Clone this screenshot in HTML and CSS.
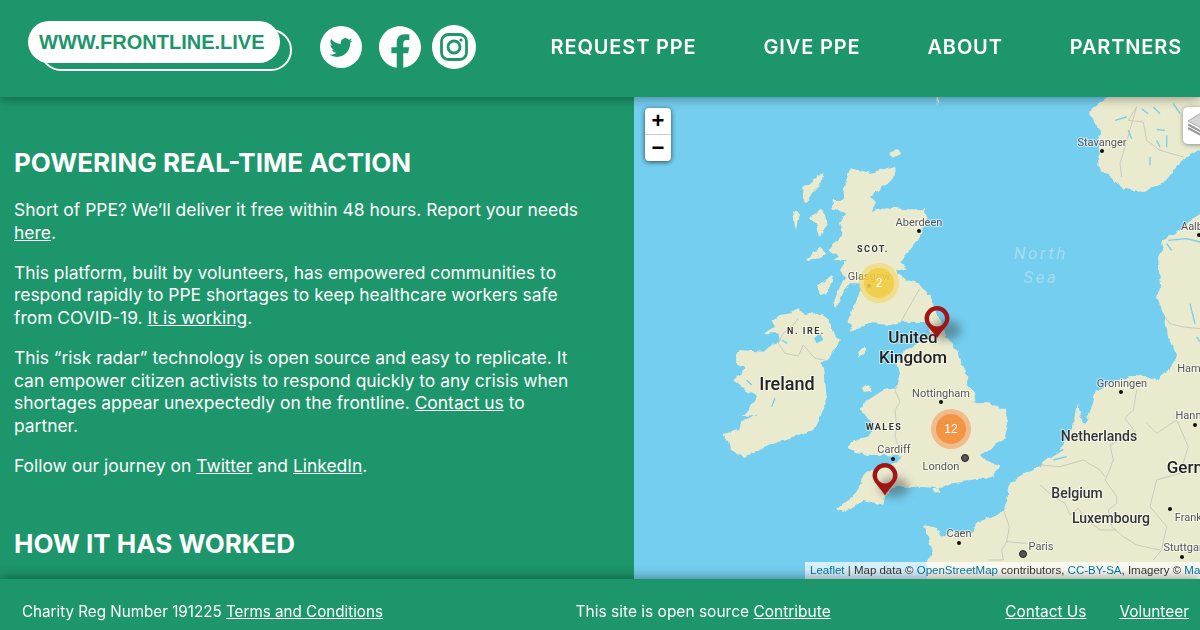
FILE: index.html
```html
<!DOCTYPE html>
<html lang="en">
  <head>
    <meta charset="UTF-8" />
    <meta name="viewport" content="width=device-width, initial-scale=1.0" />
    <title>Frontline Live</title>
    <link rel="stylesheet" href="styles.css">
  </head>
  <body>
    <div class="header">
      <div class="brand">
        <a class="logo">WWW.FRONTLINE.LIVE</a>
        <div class="social">
          <svg class="social-icon twitter" viewBox="0 0 42 42">
            <circle cx="21" cy="21" r="21" fill="#fff" />
            <path transform="translate(9.5 10) scale(.96)" fill="#1c966a" d="M23.953 4.57a10 10 0 01-2.825.775 4.958 4.958 0 002.163-2.723c-.951.555-2.005.959-3.127 1.184a4.92 4.92 0 00-8.384 4.482C7.69 8.095 4.067 6.13 1.64 3.162a4.822 4.822 0 00-.666 2.475c0 1.71.87 3.213 2.188 4.096a4.904 4.904 0 01-2.228-.616v.06a4.923 4.923 0 003.946 4.827 4.996 4.996 0 01-2.212.085 4.936 4.936 0 004.604 3.417 9.867 9.867 0 01-6.102 2.105c-.39 0-.779-.023-1.17-.067a13.995 13.995 0 007.557 2.209c9.053 0 13.998-7.496 13.998-13.985 0-.21 0-.42-.015-.63A9.935 9.935 0 0024 4.59z" />
          </svg>
          <svg class="social-icon facebook" viewBox="0 0 24 24">
            <path fill="#fff" d="M24 12.073c0-6.627-5.373-12-12-12s-12 5.373-12 12c0 5.99 4.388 10.954 10.125 11.854v-8.385H7.078v-3.47h3.047V9.43c0-3.007 1.792-4.669 4.533-4.669 1.312 0 2.686.235 2.686.235v2.953H15.83c-1.491 0-1.956.925-1.956 1.874v2.25h3.328l-.532 3.47h-2.796v8.385C19.612 23.027 24 18.062 24 12.073z" />
          </svg>
          <svg class="social-icon instagram" viewBox="0 0 44 44">
            <circle cx="22" cy="22" r="22" fill="#fff" />
            <rect x="9.500" y="9.500" width="25" height="25" rx="7" fill="none" stroke="#1c966a" stroke-width="2.800" />
            <circle cx="22" cy="22" r="6" fill="none" stroke="#1c966a" stroke-width="2.800" />
            <circle cx="29" cy="15" r="1.600" fill="#1c966a" />
          </svg>
        </div>
      </div>
      <nav class="nav">
        <a>REQUEST PPE</a>
        <a>GIVE PPE</a>
        <a>ABOUT</a>
        <a>PARTNERS</a>
      </nav>
    </div>

    <div class="main">
      <div class="content">
        <h2>POWERING REAL-TIME ACTION</h2>
        <p>Short of PPE? We’ll deliver it free within 48 hours. Report your needs <a>here</a>.</p>
        <p>This platform, built by volunteers, has empowered communities to respond rapidly to PPE shortages to keep healthcare workers safe from COVID-19. <a>It is working</a>.</p>
        <p>This “risk radar” technology is open source and easy to replicate. It can empower citizen activists to respond quickly to any crisis when shortages appear unexpectedly on the frontline. <a>Contact us</a> to partner.</p>
        <p>Follow our journey on <a>Twitter</a> and <a>LinkedIn</a>.</p>
        <h2 class="second">HOW IT HAS WORKED</h2>
      </div>

      <div class="map">
        <svg class="map-canvas" viewBox="634 97 566 482">
          <defs>
            <filter id="rough" filterUnits="userSpaceOnUse" x="624" y="87" width="590" height="510">
              <feTurbulence type="fractalNoise" baseFrequency="0.14" numOctaves="2" seed="4" />
              <feDisplacementMap in="SourceGraphic" scale="5" xChannelSelector="R" yChannelSelector="G" />
            </filter>
          </defs>
          <rect x="634" y="97" width="566" height="482" fill="#74ceef" />

          <!-- land, traced in 3x crop coordinates -->
          <g class="land" filter="url(#rough)">
            <g transform="translate(790 150) scale(.3333)">
              <path d="M180 55 L240 68 L315 48 L318 75 L295 100 L265 120 L240 140 L258 160 L245 185 L290 172 L350 178 L405 178 L412 205 L395 245 L385 270 L360 300 L330 335 L352 355 L320 362 L335 385 L385 400 L420 440 L440 490 L470 560 L500 600 L520 650 L535 680 L530 705 L555 725 L560 760 L600 760 L645 780 L655 820 L645 860 L610 890 L570 915 L590 935 L630 945 L610 980 L560 990 L490 1000 L450 1015 L390 1010 L330 1010 L305 1015 L285 1040 L280 1065 L260 1060 L220 1050 L165 1085 L140 1075 L190 1040 L215 1000 L220 975 L255 955 L310 940 L335 920 L290 915 L240 915 L200 910 L170 890 L195 870 L230 860 L255 840 L240 810 L215 785 L220 760 L280 720 L315 715 L322 700 L330 670 L322 640 L345 600 L390 579 L420 555 L414 516 L340 515 L300 525 L250 520 L230 525 L180 545 L185 520 L172 515 L190 470 L215 420 L205 400 L180 400 L165 420 L150 445 L135 475 L130 460 L150 410 L165 380 L150 360 L170 330 L130 330 L150 320 L115 300 L140 270 L160 250 L150 220 L165 190 L130 175 L128 150 L165 150 L160 120 Z" />
              <path d="M40 115 L85 75 L100 70 L95 100 L70 125 L50 160 L40 140 Z" />
              <path d="M60 205 L90 175 L105 195 L110 225 L90 260 L80 225 Z" />
              <path d="M10 180 L28 185 L18 240 L12 210 Z" />
              <path d="M50 325 L90 290 L110 310 L90 325 L50 330 Z" />
              <path d="M82 410 L125 375 L130 395 L110 430 L90 435 Z" />
              <path d="M295 10 L320 0 L335 10 L310 25 Z" />
              <path d="M215 710 L240 705 L245 725 L225 728 Z" />
              <path d="M205 605 L225 590 L225 610 L208 625 Z" />
              <path d="M430 1018 L450 1015 L452 1025 L435 1028 Z" />
            </g>
            <g transform="translate(700 290) scale(.3333)">
              <path d="M190 130 L225 110 L215 90 L240 75 L275 70 L295 55 L315 75 L350 68 L385 85 L400 130 L420 150 L405 175 L385 210 L360 215 L370 240 L375 300 L380 340 L350 400 L340 420 L310 430 L250 450 L200 470 L160 490 L130 500 L90 480 L85 455 L70 432 L115 420 L120 395 L170 375 L125 378 L160 340 L170 320 L135 300 L100 270 L125 250 L130 235 L105 215 L115 180 L195 185 L215 165 L240 155 L235 130 Z" />
            </g>
            <g transform="translate(1040 97) scale(.3333)">
              <path d="M245 -30 L160 30 L150 50 L180 100 L175 180 L175 210 L210 240 L250 275 L310 285 L370 260 L410 210 L440 180 L510 140 L510 -30 Z" />
            </g>
            <path d="M1215 205 L1200 214 L1180 230 L1162 240 L1163 250 L1158 257 L1160 287 L1157 297 L1165 317 L1168 337 L1177 357 L1168 370 L1157 380 L1137 375 L1110 383 L1095 393 L1093 403 L1085 425 L1077 403 L1073 427 L1060 450 L1050 457 L1040 465 L1010 483 L1007 500 L1003 512 L975 523 L972 533 L953 532 L940 537 L938 528 L923 525 L928 537 L932 553 L927 563 L925 595 L1215 595 Z" />
            <path d="M937 90 L941 90 L938 107 Z" />
          </g>

          <g class="water">
            <g transform="translate(1040 97) scale(.3333)">
              <path d="M305 35 L325 50 M340 30 L360 50 M400 20 L420 50 M265 100 L275 125 M350 130 L360 150 M380 115 L380 150 M330 180 L330 205 M350 98 L375 100 M225 70 L260 60" />
              <path d="M385 430 L440 425 L480 435 M450 620 L465 680 M470 720 L480 735 M380 440 L395 460" />
            </g>
            <g transform="translate(700 290) scale(.3333)">
              <path class="lake" d="M342 145 L360 130 L370 150 L350 160 Z" />
              <path d="M245 150 L262 160 M215 350 L225 325 M140 270 L155 285" />
            </g>
            <g transform="translate(1040 360) scale(.3333)">
              <path d="M30 293 L70 268 M40 300 L80 290" />
            </g>
          </g>

          <g class="border">
            <g transform="translate(1040 360) scale(.3333)">
              <path d="M290 90 L280 150 L255 175 L285 215 L210 255 L220 300 L205 340 L195 360 L230 410 L230 430 L205 450 L215 500 L250 530 L290 555 L360 570" />
              <path d="M0 315 L60 320 L130 300 L180 330 L195 350" />
              <path d="M0 375 L40 410 L75 430 L90 465 L115 445 L130 470 L180 510 L230 510" />
              <path d="M320 190 L350 220 L410 180 L445 260 L420 340 L350 360 L340 400 L330 440 L380 500 L365 570 L340 600" />
            </g>
            <g transform="translate(1040 97) scale(.3333)">
              <path d="M375 660 L390 680 L430 690 L480 695" />
              <path d="M290 30 L265 70 L310 75 L320 130 L360 160 L430 180 M290 30 L240 200 L245 240" />
            </g>
            <g transform="translate(790 150) scale(.3333)">
              <path d="M330 520 L375 440 L390 415" />
            </g>
            <g transform="translate(820 340) scale(.3333)">
              <path d="M225 150 L240 185 L225 210 L230 260 L225 290 L235 320" />
            </g>
            <g transform="translate(700 290) scale(.3333)">
              <path d="M295 85 L280 105 L250 130 L235 160 L255 190 L295 198 L310 165 L345 205 L375 210" />
            </g>
            <g transform="translate(900 500) scale(.3333)">
              <path d="M310 30 L328 80 L320 125 L380 130 M320 125 L305 150 L310 180 L265 180" />
            </g>
          </g>

          <g class="label">
            <text x="1102" y="146" class="city">Stavanger</text>
            <text x="919" y="226" class="city">Aberdeen</text>
            <text x="873" y="252" class="region">SCOT.</text>
            <text x="806" y="334" class="region">N. IRE.</text>
            <text x="884" y="430" class="region">WALES</text>
            <text x="951" y="427" class="region">ENG.</text>
            <text x="1041" y="259" class="sea">North</text>
            <text x="1041" y="283" class="sea">Sea</text>
            <text x="869" y="280" class="city">Glasgow</text>
            <text x="913" y="343" class="big">United</text>
            <text x="913" y="363" class="big">Kingdom</text>
            <text x="787" y="390" class="big ireland">Ireland</text>
            <text x="941" y="397" class="city">Nottingham</text>
            <text x="894" y="453" class="city">Cardiff</text>
            <text x="941" y="470" class="city">London</text>
            <text x="1122" y="387" class="city">Groningen</text>
            <text x="1099" y="441" class="country">Netherlands</text>
            <text x="1077" y="498" class="country">Belgium</text>
            <text x="1111" y="523" class="country">Luxembourg</text>
            <text x="959" y="537" class="city">Caen</text>
            <text x="1041" y="550" class="city">Paris</text>
            <text x="1201" y="473" class="big">Germany</text>
            <text x="1197" y="521" class="city">Frankfurt</text>
            <text x="1185" y="551" class="city">Stuttgart</text>
            <text x="1200" y="230" class="city">Aalborg</text>
            <text x="1200" y="372" class="city">Hamburg</text>
            <text x="1199" y="419" class="city">Hannover</text>
          </g>
          <g fill="#111">
            <circle cx="1102" cy="151" r="2" />
            <circle cx="919" cy="231" r="2" />
            <circle cx="869" cy="286" r="2" />
            <circle cx="941" cy="402" r="2" />
            <circle cx="893" cy="459" r="2" />
            <circle cx="1121" cy="392" r="2" />
            <circle cx="959" cy="543" r="2" />
            <circle cx="1170" cy="509" r="2" />
            <circle cx="1182" cy="557" r="2" />
            <circle cx="1195" cy="425" r="2" />
            <circle cx="1199" cy="235" r="2" />
            <circle cx="965" cy="458" r="3.500" fill="#555" stroke="#222" />
            <circle cx="1023" cy="554" r="3.500" fill="#555" stroke="#222" />
          </g>

          <circle cx="879" cy="283" r="20" fill="#f1d357" fill-opacity="0.55" />
          <circle cx="879" cy="283" r="15" fill="#f0c93a" fill-opacity="0.75" />
          <text x="879" y="287" class="count">2</text>
          <circle cx="951" cy="429" r="20" fill="#f5a268" fill-opacity="0.65" />
          <circle cx="951" cy="429" r="15" fill="#f39140" fill-opacity="0.92" />
          <text x="951" y="433" class="count">12</text>

          <g class="pin-shadow" fill="#333" fill-opacity="0.4">
            <ellipse cx="946" cy="330" rx="15" ry="10" />
            <ellipse cx="894" cy="487" rx="15" ry="10" />
          </g>
          <path class="pin" d="M937 338 C932 330 924.500 325 924.500 318.500 A12.500 12.500 0 0 1 949.500 318.500 C949.500 325 942 330 937 338 Z M937 310.500 A8 8 0 1 0 937.001 310.500 Z" />
          <path class="pin" d="M885 495.500 C880 487 872.500 482 872.500 475.500 A12.500 12.500 0 0 1 897.500 475.500 C897.500 482 890 487 885 495.500 Z M885 467.500 A8 8 0 1 0 885.001 467.500 Z" />
        </svg>

        <div class="zoom">
          <a class="zoom-in">+</a>
          <a class="zoom-out">−</a>
        </div>
        <div class="layers">
          <svg viewBox="0 0 26 26" width="26" height="26">
            <path d="M13 1 L26 9 L13 16 L0 9 Z" fill="#d6d6d6" stroke="#9a9a9a" stroke-width="0.800" />
            <path d="M0 12.500 L13 19.500 L26 12.500" fill="none" stroke="#9a9a9a" stroke-width="2" />
            <path d="M0 16 L13 23 L26 16" fill="none" stroke="#9a9a9a" stroke-width="2" />
          </svg>
        </div>
        <div class="attribution"><a>Leaflet</a> | Map data © <a>OpenStreetMap</a> contributors, <a>CC-BY-SA</a>, Imagery © <a>Mapbox</a></div>
      </div>
    </div>

    <div class="footer">
      <div class="footer-left">Charity Reg Number 191225 <a>Terms and Conditions</a></div>
      <div class="footer-mid">This site is open source <a>Contribute</a></div>
      <div class="footer-right"><a>Contact Us</a><a>Volunteer</a></div>
    </div>
  </body>
</html>
```

FILE: styles.css
```css
body {
  margin: 0;
  width: 1200px;
  height: 630px;
  overflow: hidden;
  display: flex;
  flex-direction: column;
  background: #1c966a;
  color: #fff;
  font-family: Inter, "Noto Sans", sans-serif;
}
.header {
  height: 97px;
  flex: none;
  display: flex;
  justify-content: space-between;
  position: relative;
  z-index: 2;
  background: #1c966a;
  box-shadow: 0 2px 10px rgba(0, 0, 0, 0.35);
}
.brand {
  display: flex;
  align-items: flex-start;
  padding: 21px 0 0 28px;
}
.logo {
  position: relative;
  width: 252px;
  height: 42px;
  line-height: 42px;
  box-sizing: border-box;
  padding-left: 11px;
  background: #fff;
  border-radius: 21px;
  color: #1c966a;
  font-family: "Liberation Sans", Arial, sans-serif;
  font-size: 20px;
  font-weight: bold;
}
.logo::after {
  content: "";
  position: absolute;
  z-index: -1;
  left: 12px;
  top: 8px;
  width: 252px;
  height: 42px;
  box-sizing: border-box;
  border: 2px solid #fff;
  border-radius: 21px;
}
.social {
  display: flex;
  align-items: center;
  margin: 4px 0 0 40px;
}
.social-icon {
  display: block;
  width: 42px;
  height: 42px;
}
.facebook {
  margin-left: 17px;
}
.instagram {
  width: 44px;
  height: 44px;
  margin-left: 11px;
}
.nav {
  display: flex;
  gap: 67px;
  padding: 35px 18px 0 0;
  font-size: 20px;
  font-weight: 600;
  letter-spacing: 0.85px;
}
.main {
  flex: 1;
  min-height: 0;
  display: flex;
}
.content {
  width: 634px;
  flex: none;
  box-sizing: border-box;
  padding: 0 48px 0 14px;
  overflow: hidden;
}
h2 {
  margin: 51px 0 0;
  font-size: 26px;
  line-height: 30px;
  font-weight: 700;
}
h2.second {
  margin-top: 51px;
}
p {
  margin: 0 0 17.6px;
  font-size: 17.43px;
  line-height: 22.6px;
}
h2 + p {
  margin-top: 21px;
}
a {
  color: inherit;
}
p a,
.footer a {
  text-decoration: underline;
}
.map {
  flex: 1;
  position: relative;
  overflow: hidden;
}
.map-canvas {
  display: block;
  width: 566px;
  height: 482px;
}
.land {
  fill: #eaebce;
}
.lake {
  fill: #74ceef;
}
.water {
  fill: none;
  stroke: #74ceef;
  stroke-width: 4;
}
.water .lake {
  stroke: none;
}
.border {
  fill: none;
  stroke: #c4c2bb;
  stroke-width: 2.5;
}
.label text {
  font-family: Roboto, sans-serif;
  text-anchor: middle;
  stroke: rgba(255, 255, 255, 0.55);
  stroke-width: 2px;
  paint-order: stroke;
}
.label .city {
  font-size: 11px;
  fill: #555;
}
.label .big {
  font-size: 17px;
  font-weight: 500;
  fill: #222;
}
.label .ireland {
  font-size: 18px;
}
.label .country {
  font-size: 14px;
  font-weight: 500;
  fill: #333;
}
.label .region {
  font-size: 9px;
  font-weight: 700;
  letter-spacing: 1.5px;
  fill: #333;
}
.label .sea {
  font-size: 17px;
  font-style: italic;
  letter-spacing: 2.5px;
  fill: #a5dcf2;
  stroke: none;
}
.count {
  font-family: "Liberation Sans", sans-serif;
  font-size: 12px;
  fill: #fff;
  text-anchor: middle;
}
.pin {
  fill: #a01616;
  fill-rule: evenodd;
}
.pin-shadow {
  filter: blur(4px);
}
.zoom {
  position: absolute;
  top: 11px;
  left: 11px;
  width: 26px;
  border-radius: 4px;
  overflow: hidden;
  box-shadow: 0 1px 5px rgba(0, 0, 0, 0.65);
  background: #fff;
  color: #000;
  font-family: "Liberation Sans", sans-serif;
  font-size: 22px;
  font-weight: bold;
  text-align: center;
}
.zoom a {
  display: block;
  height: 26px;
  line-height: 26px;
}
.zoom-in {
  border-bottom: 1px solid #ccc;
}
.layers {
  position: absolute;
  top: 10px;
  left: 549px;
  width: 40px;
  height: 37px;
  box-sizing: border-box;
  padding: 5px;
  background: #fff;
  border-radius: 5px;
  box-shadow: 0 1px 5px rgba(0, 0, 0, 0.4);
}
.attribution {
  position: absolute;
  left: 171px;
  bottom: 0;
  width: 395px;
  height: 17px;
  box-sizing: border-box;
  padding-left: 5px;
  overflow: hidden;
  white-space: nowrap;
  background: rgba(255, 255, 255, 0.7);
  color: #333;
  font-family: "Liberation Sans", sans-serif;
  font-size: 11.5px;
  line-height: 17px;
}
.attribution a {
  color: #0078a8;
}
.footer {
  height: 51px;
  flex: none;
  position: relative;
  z-index: 2;
  display: flex;
  align-items: center;
  justify-content: space-between;
  box-sizing: border-box;
  padding: 14px 11px 0 22px;
  background: #1c966a;
  box-shadow: 0 -2px 10px rgba(0, 0, 0, 0.35);
  font-size: 15.4px;
}
.footer-left {
  font-size: 15.2px;
}
.footer-mid {
  margin-left: 18px;
  font-size: 15.5px;
}
.footer-right {
  display: flex;
  gap: 33px;
}
```
